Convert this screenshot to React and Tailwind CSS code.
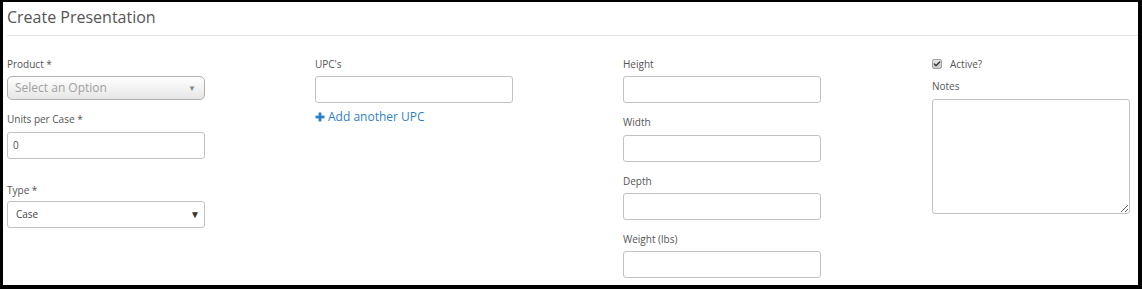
import { Check } from 'lucide-react'

const font = { fontFamily: '"Open Sans", "Liberation Sans", sans-serif' }

function Label({ children, className = '' }) {
  return <div className={`h-[16px] text-[10px] leading-[16px] text-[#555] ${className}`}>{children}</div>
}

function TextBox({ value = '', className = '' }) {
  return (
    <div
      className={`flex h-[27px] w-[198px] items-center rounded-[3px] border border-[#c2c2c2] bg-white pl-[5px] text-[10px] text-[#555] ${className}`}
    >
      {value}
    </div>
  )
}

export default function App() {
  return (
    <div
      style={font}
      className="h-[289px] w-[1142px] overflow-hidden border-t-2 border-r-4 border-b-4 border-l-[3px] border-solid border-black bg-white"
    >
      {/* Header */}
      <div className="pl-[4px] pt-[4px]">
        <h1 className="h-[22px] text-[16px] leading-[22px] font-normal text-[#555]">Create Presentation</h1>
      </div>
      <div className="ml-[4px] mt-[7px] h-px bg-[#e3e3e3]" />

      {/* Form */}
      <div className="flex pl-[4px] pt-[20px]">
        {/* Column 1 */}
        <div className="flex w-[308px] flex-col">
          <Label>Product *</Label>
          <div className="mt-[4px] flex h-[24px] w-[198px] items-center justify-between rounded-[5px] border border-[#b0b0b0] bg-gradient-to-b from-white to-[#e6e6e6] pl-[7px] pr-[8px] text-[12px] text-[#a0a0a0]">
            <span>Select an Option</span>
            <span className="text-[8px] text-[#888]">▼</span>
          </div>
          <Label className="mt-[11px]">Units per Case *</Label>
          <TextBox value="0" className="mt-[5px]" />
          <Label className="mt-[23px]">Type *</Label>
          <div className="mt-[3px] flex h-[27px] w-[198px] items-center justify-between rounded-[3px] border border-[#c2c2c2] bg-white pl-[8px] pr-[4px] text-[10px] text-[#444]">
            <span>Case</span>
            <span className="text-[10px] text-[#333]">▼</span>
          </div>
        </div>

        {/* Column 2 */}
        <div className="flex w-[308px] flex-col">
          <Label>UPC's</Label>
          <TextBox className="mt-[4px]" />
          <div className="mt-[6px] flex h-[16px] items-center gap-[3px] text-[12px] leading-[16px] text-[#2f7fc6]">
            <svg width="10" height="10" viewBox="0 0 10 10" className="shrink-0">
              <rect x="3.6" y="0.5" width="2.8" height="9" fill="#2f7fc6" />
              <rect x="0.5" y="3.6" width="9" height="2.8" fill="#2f7fc6" />
            </svg>
            <span>Add another UPC</span>
          </div>
        </div>

        {/* Column 3 */}
        <div className="flex w-[309px] flex-col">
          <Label>Height</Label>
          <TextBox className="mt-[4px]" />
          <Label className="mt-[11px]">Width</Label>
          <TextBox className="mt-[5px]" />
          <Label className="mt-[11px]">Depth</Label>
          <TextBox className="mt-[4px]" />
          <Label className="mt-[11px]">Weight (lbs)</Label>
          <TextBox className="mt-[4px]" />
        </div>

        {/* Column 4 */}
        <div className="flex w-[198px] flex-col">
          <div className="flex h-[16px] items-center gap-[8px]">
            <span className="flex h-[10px] w-[10px] items-center justify-center rounded-[2px] border border-[#a0a0a0] bg-gradient-to-b from-[#e6e6e6] to-[#c8c8c8]">
              <Check size={8} strokeWidth={4} color="#333" />
            </span>
            <span className="text-[10px] leading-[16px] text-[#555]">Active?</span>
          </div>
          <Label className="mt-[6px]">Notes</Label>
          <textarea
            className="mt-[5px] h-[115px] w-[198px] resize rounded-[3px] border border-[#c2c2c2] bg-white outline-none"
            defaultValue=""
          />
        </div>
      </div>
    </div>
  )
}
